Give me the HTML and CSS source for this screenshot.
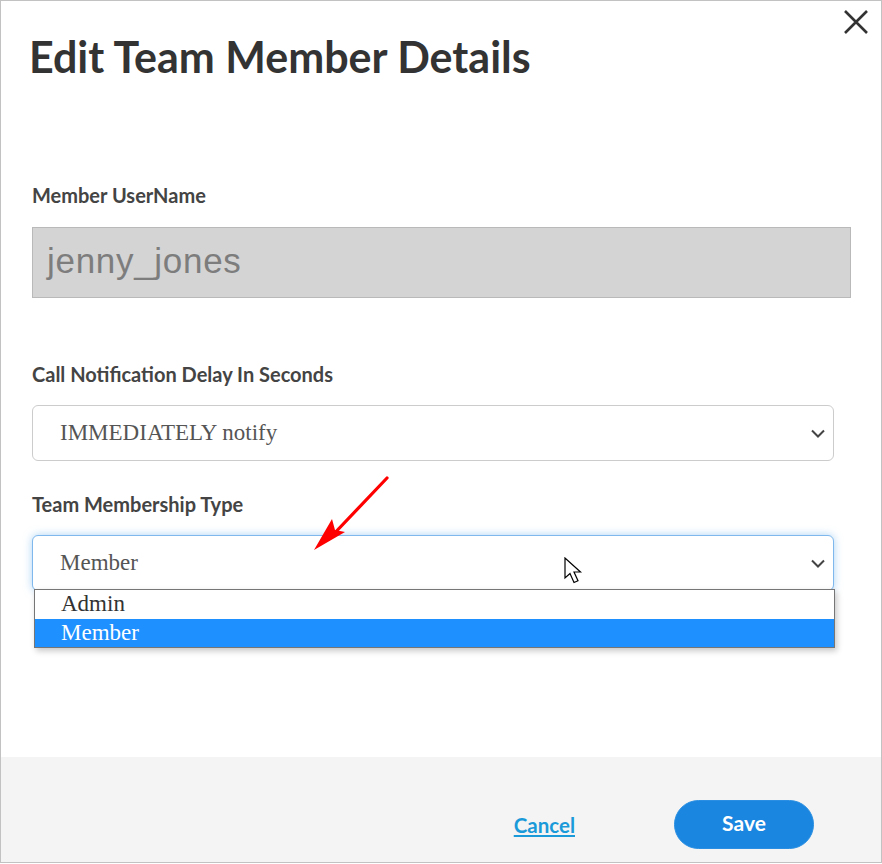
FILE: index.html
```html
<!DOCTYPE html>
<html lang="en">
<head>
<meta charset="utf-8">
<title>Edit Team Member Details</title>
<link rel="stylesheet" href="styles.css">
</head>
<body>
<div class="modal">
  <div class="content">
    <div class="header">
      <h1 class="title">Edit Team Member Details</h1>
      <button class="close" aria-label="Close">
        <svg width="26" height="26" viewBox="0 0 26 26"><path d="M2 2 L24 24 M24 2 L2 24" stroke="#333" stroke-width="2.6" fill="none"/></svg>
      </button>
    </div>

    <label class="label first">Member UserName</label>
    <div class="input-disabled">jenny_jones</div>

    <label class="label second">Call Notification Delay In Seconds</label>
    <div class="select">
      <span class="select-value">IMMEDIATELY notify</span>
      <svg class="chev" width="14" height="9" viewBox="0 0 14 9"><path d="M1 1.5 L7 7.5 L13 1.5" stroke="#444" stroke-width="2" fill="none"/></svg>
    </div>

    <label class="label third">Team Membership Type</label>
    <div class="select-wrap">
      <div class="select focused">
        <span class="select-value">Member</span>
        <svg class="chev" width="14" height="9" viewBox="0 0 14 9"><path d="M1 1.5 L7 7.5 L13 1.5" stroke="#444" stroke-width="2" fill="none"/></svg>
      </div>
      <ul class="options">
        <li class="option">Admin</li>
        <li class="option selected">Member</li>
      </ul>
      <svg class="cursor" width="20" height="28" viewBox="0 0 20 28"><path d="M1 1 L1 21 L6 16.5 L10 25.5 L14 23.8 L10 15 L16.5 15 Z" fill="#fff" stroke="#000" stroke-width="1.2" stroke-linejoin="miter"/></svg>
    </div>

    <svg class="red-arrow" width="90" height="92" viewBox="0 0 90 92"><path d="M86 12 L28 73" stroke="#ff0000" stroke-width="3.2" stroke-linecap="round"/><path d="M13 84 L31 53 L34 64 L44 66 Z" fill="#ff0000"/></svg>
  </div>
  <div class="footer">
    <a class="cancel" href="#">Cancel</a>
    <button class="save">Save</button>
  </div>
</div>
</body>
</html>
```

FILE: styles.css
```css
html, body {
  margin: 0;
  padding: 0;
  background: #ffffff;
}

.modal {
  width: 882px;
  height: 863px;
  box-sizing: border-box;
  border: 1px solid #c2c2c2;
  display: flex;
  flex-direction: column;
  background: #ffffff;
  font-family: "Lato", "Liberation Sans", sans-serif;
}

.content {
  flex: 1;
  padding: 0 30px 0 31px;
  display: flex;
  flex-direction: column;
  position: relative;
}

.header {
  display: flex;
  justify-content: space-between;
  align-items: flex-start;
}

.title {
  margin: 31px 0 0 -3px;
  font-size: 43px;
  line-height: 50px;
  font-weight: 700;
  color: #333333;
}

.close {
  margin: 8px -18px 0 0;
  padding: 0;
  border: 0;
  background: transparent;
  width: 26px;
  height: 26px;
  display: flex;
}

.label {
  display: block;
  font-size: 20px;
  line-height: 20px;
  font-weight: 700;
  color: #444444;
}

.label.first { margin-top: 103px; }
.label.second { margin-top: 66px; }
.label.third { margin-top: 33px; }

.input-disabled {
  margin-top: 22px;
  height: 71px;
  box-sizing: border-box;
  background: #d4d4d4;
  border: 1px solid #b9b9b9;
  display: flex;
  align-items: center;
  padding: 0 14px 4px;
  font-family: "Liberation Sans", Arial, sans-serif;
  font-size: 35px;
  letter-spacing: 0.7px;
  color: #7d7d7d;
}

.select {
  margin-top: 21px;
  width: 802px;
  height: 56px;
  box-sizing: border-box;
  border: 1px solid #cccccc;
  border-radius: 6px;
  display: flex;
  align-items: center;
  justify-content: space-between;
  padding: 0 8px 0 27px;
  background: #ffffff;
}

.select-value {
  font-family: "Liberation Serif", "Times New Roman", serif;
  font-size: 23px;
  color: #555555;
}

.select-wrap {
  position: relative;
  margin-top: 21px;
}

.select-wrap .select {
  margin-top: 0;
}

.select.focused {
  border-color: #7fb8ec;
  box-shadow: 0 0 8px rgba(102, 175, 233, 0.55);
}

.options {
  position: absolute;
  top: 54px;
  left: 2px;
  width: 801px;
  margin: 0;
  padding: 0;
  list-style: none;
  box-sizing: border-box;
  border: 1px solid #767676;
  background: #ffffff;
  box-shadow: 2px 3px 6px rgba(0, 0, 0, 0.22);
}

.option {
  height: 29px;
  line-height: 28px;
  padding-left: 26px;
  font-family: "Liberation Serif", "Times New Roman", serif;
  font-size: 23px;
  color: #333333;
}

.option.selected {
  height: 28px;
  background: #1e90ff;
  color: #ffffff;
}

.cursor {
  position: absolute;
  left: 532px;
  top: 22px;
}

.red-arrow {
  position: absolute;
  left: 300px;
  top: 465px;
}

.footer {
  height: 105px;
  box-sizing: border-box;
  background: #f4f4f4;
  display: flex;
  justify-content: flex-end;
  align-items: center;
  padding: 30px 67px 0 0;
  gap: 99px;
}

.cancel {
  font-size: 20.5px;
  font-weight: 700;
  color: #1b9ad9;
  text-decoration: underline;
  text-underline-offset: 2px;
}

.save {
  width: 140px;
  height: 49px;
  border: 1px solid #2a8fe2;
  border-radius: 25px;
  background: #1a86e0;
  color: #ffffff;
  font-family: "Lato", "Liberation Sans", sans-serif;
  font-size: 21px;
  font-weight: 700;
  padding: 0 0 4px;
}
```
